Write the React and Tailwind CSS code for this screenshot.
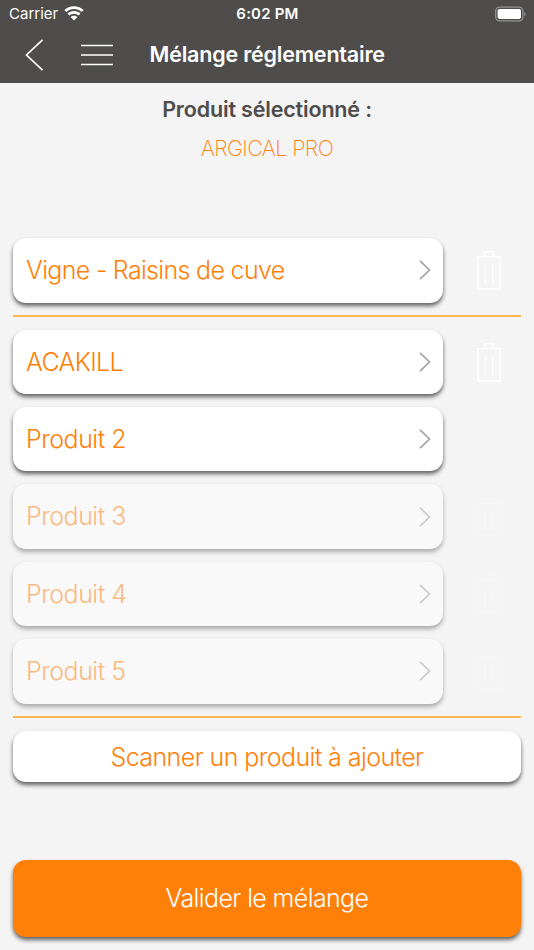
const products = [
  { name: 'ACAKILL', removable: true, enabled: true },
  { name: 'Produit 2', removable: false, enabled: true },
  { name: 'Produit 3', removable: true, enabled: false },
  { name: 'Produit 4', removable: true, enabled: false },
  { name: 'Produit 5', removable: true, enabled: false },
];

const TrashIcon = () => (
  <svg className="w-[28px] h-[42px]" viewBox="0 0 28 42" fill="none" stroke="white" strokeWidth={1.4}>
    <path d="M1 7.6h26M2.9 7.6v32.4h22v-32.4M9.7 7.4V2.6h8.6V7.4M10.3 14v20.5M17.7 14v20.5" />
  </svg>
);

const StatusBar = () => (
  <div className="flex h-[27px] items-center justify-between pl-[9px] pr-[8px] text-white">
    <div className="flex flex-1 items-center gap-[6px]">
      <span className="pt-px text-[15px]">Carrier</span>
      <svg className="w-[20px] h-[15px]" viewBox="0 0 20 15" fill="white">
        <path d="M10 0.3C6.2 0.3 2.9 1.7 0.4 4L2.3 6C4.3 4.1 7 3 10 3s5.7 1.1 7.7 3L19.6 4C17.1 1.7 13.8 0.3 10 0.3z" />
        <path d="M10 5C7.5 5 5.2 6 3.5 7.5L5.4 9.5C6.6 8.4 8.2 7.7 10 7.7s3.4 0.7 4.6 1.8L16.5 7.5C14.8 6 12.5 5 10 5z" />
        <path d="M10 9.7C8.7 9.7 7.5 10.2 6.6 11L10 14.6 13.4 11C12.5 10.2 11.3 9.7 10 9.7z" />
      </svg>
    </div>
    <span className="pt-[2px] text-[15px] font-semibold tracking-[0.2px]">6:02 PM</span>
    <div className="flex flex-1 justify-end">
      <svg className="w-[31px] h-[16px]" viewBox="0 0 31 16" fill="none">
        <rect x="0.7" y="1.2" width="27.2" height="13.6" rx="3.8" stroke="#949392" strokeWidth="1.3" />
        <rect x="2.6" y="3.1" width="23.4" height="9.8" rx="1.8" fill="white" />
        <path d="M29.3 5.7c1.7 0.7 1.7 3.9 0 4.6z" fill="#949392" />
      </svg>
    </div>
  </div>
);

const ProductRow = ({ name, removable = true, enabled = true }) => (
  <div className="flex items-center h-[64.5px]">
    <button
      className={`flex h-full w-[430px] items-center justify-between rounded-[13px] bg-white pl-[13px] pr-[12px] shadow-[0_3px_4px_rgba(0,0,0,0.6)] ${enabled ? '' : 'opacity-50'}`}
    >
      <span
        className={`pt-px text-[25px] font-light text-[#ff8008] ${name.startsWith('Produit') ? 'tracking-[-0.5px]' : 'tracking-[-0.68px]'}`}
      >
        {name}
      </span>
      <svg className="w-[12px] h-[20px]" viewBox="0 0 12 20" fill="none" stroke="#a3a3a3" strokeWidth={1.7}>
        <path d="M1 0.8L10.5 10 1 19.2" />
      </svg>
    </button>
    {removable && (
      <button className={`ml-[32px] ${enabled ? '' : 'opacity-30'}`} title="Supprimer">
        <TrashIcon />
      </button>
    )}
  </div>
);

const App = () => {
  return (
    <div className="flex h-[950px] w-[534px] flex-col overflow-hidden bg-[#f4f4f4] font-['Inter',sans-serif]">
      <header className="h-[82.5px] shrink-0 bg-[#4e4d4b]">
        <StatusBar />
        <div className="flex h-[55px] items-center text-white">
          <svg className="ml-[25px] w-[19px] h-[32px]" viewBox="0 0 19 32" fill="none" stroke="white" strokeWidth={1.7}>
            <path d="M17.5 0.8L1.5 16l16 15.2" />
          </svg>
          <svg className="ml-[37px] w-[32px] h-[24px]" viewBox="0 0 32 24" fill="none" stroke="white" strokeWidth={1.7}>
            <path d="M0 2.5h32M0 12h32M0 21.5h32" />
          </svg>
          <h1 className="ml-[36.5px] text-[21.5px] font-semibold tracking-[-0.2px]">Mélange réglementaire</h1>
        </div>
      </header>

      <main className="flex flex-1 flex-col px-[13px]">
        <div className="h-[155.5px] text-center">
          <h2 className="pt-[10px] text-[21.5px] leading-8 font-semibold tracking-[-0.17px] text-[#4e4d4b]">Produit sélectionné :</h2>
          <p className="pt-[7px] text-[21.5px] leading-8 font-extralight tracking-[-0.64px] text-[#ff8008]">ARGICAL PRO</p>
        </div>

        <ProductRow name="Vigne - Raisins de cuve" />
        <div className="my-[12.8px] h-[1.5px] shrink-0 bg-[#fdb650]" />

        <div className="flex flex-col gap-[12.9px]">
          {products.map((product) => (
            <ProductRow key={product.name} {...product} />
          ))}
        </div>
        <div className="my-[12.8px] h-[1.5px] shrink-0 bg-[#fdb650]" />

        <button className="h-[51.5px] shrink-0 rounded-[13px] bg-white pt-[2px] text-[25px] font-light tracking-[-0.58px] text-[#ff8008] shadow-[0_3px_4px_rgba(0,0,0,0.6)]">
          Scanner un produit à ajouter
        </button>
        <button className="mt-auto mb-[13px] h-[77.5px] shrink-0 rounded-[13px] bg-[#ff8008] text-[25px] font-light tracking-[-0.62px] text-white shadow-[0_3px_4px_rgba(0,0,0,0.6)]">
          Valider le mélange
        </button>
      </main>
    </div>
  );
};

export default App;
